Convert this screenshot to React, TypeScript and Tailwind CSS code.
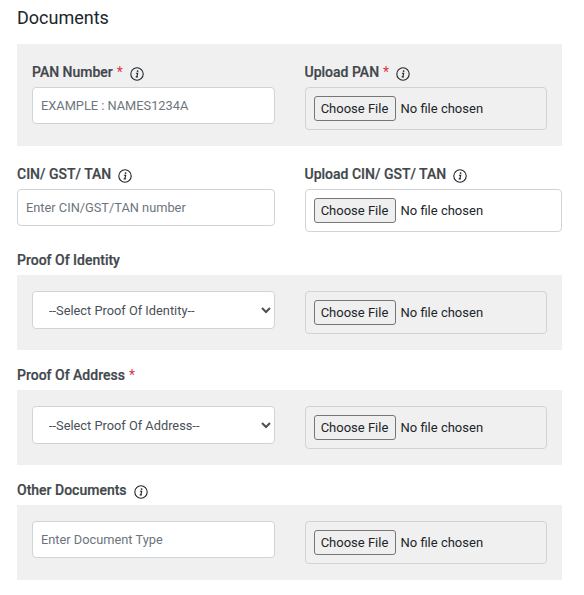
import React from "react";

function Info() {
  return (
    <svg width="14" height="14" viewBox="0 0 14 14" fill="none" className="shrink-0" aria-hidden="true">
      <circle cx="7" cy="7" r="6.2" stroke="#212529" strokeWidth="1.1" />
      <circle cx="7.6" cy="4.1" r="0.9" fill="#212529" />
      <path d="M5.9 6.2H7.7L6.8 9.9H7.9M5.7 9.9H7" stroke="#212529" strokeWidth="1.1" />
    </svg>
  );
}

function Req() {
  return <span className="text-[#dc3545] font-normal ml-1">*</span>;
}

function Label({ text, req, info }: { text: string; req?: boolean; info?: boolean }) {
  return (
    <div className="h-[27px] flex items-start pt-[2px] text-[14px] leading-[21px] font-medium text-[#42474c]">
      <span className="[-webkit-text-stroke:0.2px_#42474c]">{text}</span>
      {req && <Req />}
      {info && (
        <span className="ml-[7px] mt-[5px]">
          <Info />
        </span>
      )}
    </div>
  );
}

function TextInput({ placeholder }: { placeholder: string }) {
  return (
    <input
      type="text"
      placeholder={placeholder}
      className="block w-full h-[37px] px-[8px] bg-white border border-[#ced4da] rounded-[4px] text-[12.8px] text-[#495057] placeholder:text-[#6c757d] outline-none"
    />
  );
}

function FileBox({ white }: { white?: boolean }) {
  return (
    <div className={`h-[43px] flex items-center pl-[8px] border border-[#ced4da] rounded-[4px] ${white ? "bg-white" : "bg-[#f0f0f0]"}`}>
      <input
        type="file"
        className="block w-full text-[13px] leading-[21px] text-[#212529] [font-family:Roboto,sans-serif] file:[font-family:Roboto,sans-serif] file:text-[13px] file:h-[25px] file:w-[82px] file:mr-[5px] file:px-0 file:bg-[#efefef] file:border file:border-solid file:border-[#767676] file:rounded-[3px] file:text-[#212529]"
      />
    </div>
  );
}

function Select({ text }: { text: string }) {
  return (
    <select className="block w-full h-[38px] pl-[12px] pr-[8px] bg-white border border-[#ced4da] rounded-[4px] text-[12.8px] text-[#495057] outline-none">
      <option>{text}</option>
    </select>
  );
}

function Row({ left, right, panel }: { left: React.ReactNode; right: React.ReactNode; panel?: boolean }) {
  return (
    <div className={`grid grid-cols-2 gap-x-[30px] ${panel ? "bg-[#f0f0f0] px-[15px] py-[16px]" : ""}`}>
      <div>{left}</div>
      <div>{right}</div>
    </div>
  );
}

export default function App() {
  return (
    <div className="w-[584px] h-[595px] bg-white px-[17px] pr-[22px] pt-[6px] overflow-hidden [font-family:Roboto,sans-serif]">
      <h2 className="text-[18px] leading-[24px] font-normal text-[#212529] mb-[14px]">Documents</h2>

      <Row
        panel
        left={
          <>
            <Label text="PAN Number" req info />
            <TextInput placeholder="EXAMPLE : NAMES1234A" />
          </>
        }
        right={
          <>
            <Label text="Upload PAN" req info />
            <FileBox />
          </>
        }
      />

      <div className="mt-[16px]">
        <Row
          left={
            <>
              <Label text="CIN/ GST/ TAN" info />
              <TextInput placeholder="Enter CIN/GST/TAN number" />
            </>
          }
          right={
            <>
              <Label text="Upload CIN/ GST/ TAN" info />
              <FileBox white />
            </>
          }
        />
      </div>

      <div className="mt-[16px]">
        <Label text="Proof Of Identity" />
        <Row panel left={<Select text="--Select Proof Of Identity--" />} right={<FileBox />} />
      </div>

      <div className="mt-[13px]">
        <Label text="Proof Of Address" req />
        <Row panel left={<Select text="--Select Proof Of Address--" />} right={<FileBox />} />
      </div>

      <div className="mt-[13px]">
        <Label text="Other Documents" info />
        <Row panel left={<TextInput placeholder="Enter Document Type" />} right={<FileBox />} />
      </div>
    </div>
  );
}
